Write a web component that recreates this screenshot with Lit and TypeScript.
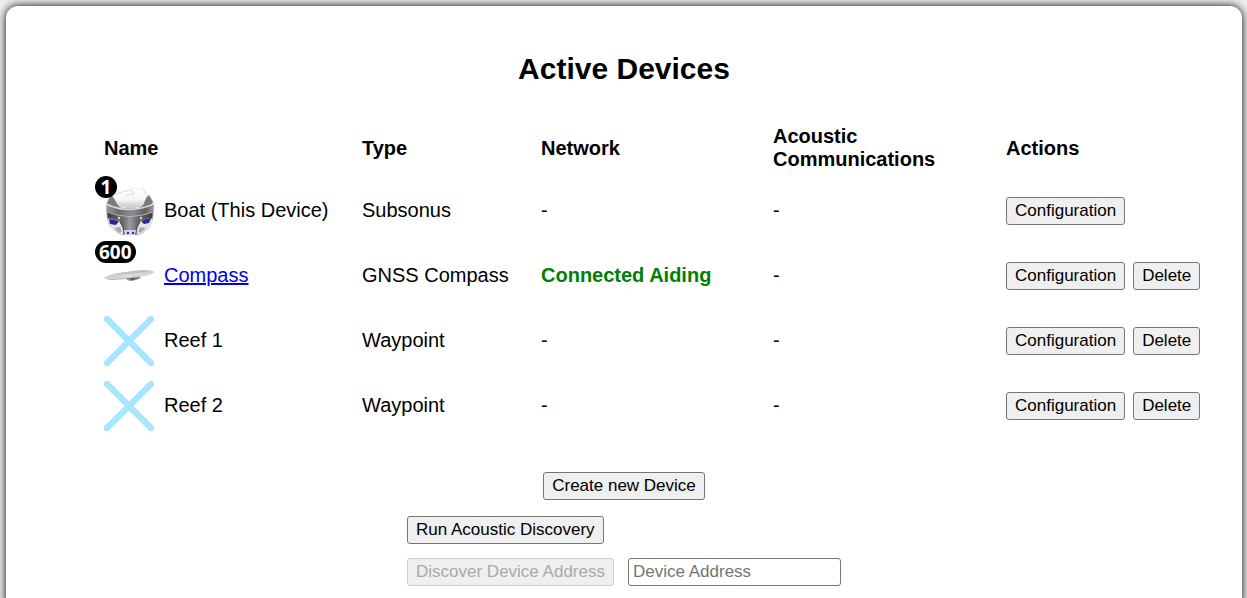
import { LitElement, html, css, nothing } from "lit";
import { customElement, property, state } from "lit/decorators.js";

type IconKind = "subsonus" | "compass" | "waypoint";

interface Device {
  name: string;
  type: string;
  icon: IconKind;
  badge?: string;
  href?: string;
  network?: string;
  removable: boolean;
}

@customElement("device-icon")
export class DeviceIcon extends LitElement {
  @property() kind: IconKind = "waypoint";
  @property() badge = "";

  static styles = css`
    :host {
      display: block;
      position: relative;
      flex: none;
      width: 50px;
      height: 50px;
    }
    svg {
      display: block;
      width: 100%;
      height: 100%;
    }
    .badge {
      position: absolute;
      left: -9px;
      top: -10px;
      box-sizing: border-box;
      min-width: 22px;
      height: 22px;
      padding: 0 4px;
      border-radius: 11px;
      background: #000;
      color: #fff;
      font: bold 19px/22px "Open Sans", "Noto Sans", sans-serif;
      text-align: center;
    }
  `;

  private subsonus() {
    return html`<svg viewBox="0 0 50 50" aria-hidden="true">
      <defs>
        <linearGradient id="side" x1="0" x2="1">
          <stop offset="0" stop-color="#b4b4b4" />
          <stop offset="0.14" stop-color="#6e6e6e" />
          <stop offset="0.86" stop-color="#6e6e6e" />
          <stop offset="1" stop-color="#b4b4b4" />
        </linearGradient>
        <linearGradient id="band" x1="0" x2="1">
          <stop offset="0" stop-color="#9a9a9a" />
          <stop offset="0.25" stop-color="#6c6c6c" />
          <stop offset="0.55" stop-color="#8a8a8a" />
          <stop offset="0.82" stop-color="#606060" />
          <stop offset="1" stop-color="#a4a4a4" />
        </linearGradient>
        <linearGradient id="dome" x1="0" x2="0" y1="0" y2="1">
          <stop offset="0" stop-color="#fff" />
          <stop offset="0.6" stop-color="#f6f6f6" />
          <stop offset="1" stop-color="#c4c4c4" />
        </linearGradient>
        <linearGradient id="column" x1="0" x2="1">
          <stop offset="0" stop-color="#3c3c3c" />
          <stop offset="0.35" stop-color="#6c6c6c" />
          <stop offset="0.5" stop-color="#9c9c9c" />
          <stop offset="0.65" stop-color="#6c6c6c" />
          <stop offset="1" stop-color="#3c3c3c" />
        </linearGradient>
      </defs>
      <path d="M2 19Q3 12 8 8L14 4 28 2 40 2 43 8Q49 12 50 19L48 24 26 28 4 24Z" fill="#e6e6e6" />
      <path d="M3 17L7 9 10 12 14 19 18 23 7 22ZM49 16L45 9 42 12 39 19 34 23 45 22Z" fill="#7c7c7c" />
      <path d="M8 9L15 4 28 2 34 3 37 1 41 3 43 9 39 19Q27 25 14 19Z" fill="url(#dome)" />
      <path d="M18 6L28 4 30 8 22 9M11 8L19 6M37 2L40 4 42 9" fill="none" stroke="#dedede" stroke-width="1" />
      <path d="M2 22Q26 34 50 22L49 33 46 41 38 48 30 49 23 49 15 48 6 41 3 34Z" fill="url(#side)" />
      <path d="M3 33L17 35 20 40 20 48 15 48 6 41ZM49 33L35 35 32 40 32 48 38 48 46 41Z" fill="#e4e4ea" />
      <path d="M5 33L15 35 12 39 6 38ZM47 32L37 35 40 38 45 37Z" fill="#2225a0" />
      <path d="M10 42L16 41 18 46 15 47ZM42 42L36 41 34 46 37 47Z" fill="#a9a9ae" />
      <path d="M3 25Q26 34 49 25L48 32Q38 32 35 37 33 41 32 45H20Q19 41 17 37 14 32 4 32Z" fill="url(#column)" />
      <path d="M16 36Q20 41 20 48M36 36Q32 41 32 48" fill="none" stroke="#444" stroke-width="1.2" />
      <path d="M2 18Q2 16 4 18Q25 27 49 18Q51 16 50 20L49 25Q27 34 3 25Z" fill="url(#band)" />
      <path d="M2 18Q25 29 50 18" fill="none" stroke="#dcdcdc" stroke-width="1.4" />
      <path d="M3 26Q26 35 49 26" fill="none" stroke="#b6b6b6" stroke-width="1" />
      <circle cx="15" cy="32" r="1.2" fill="#d9d9d9" />
      <circle cx="37" cy="32" r="1.2" fill="#d9d9d9" />
      <path d="M20 44H32L31 49H21Z" fill="#ddd2f0" />
      <circle cx="24" cy="47" r="1.2" fill="#2a25a4" />
      <circle cx="29" cy="47" r="1.2" fill="#2a25a4" />
    </svg>`;
  }

  private compass() {
    return html`<svg viewBox="0 0 50 50" aria-hidden="true">
      <defs>
        <linearGradient id="shell" x1="0" x2="0" y1="0" y2="1">
          <stop offset="0" stop-color="#c4c4c4" />
          <stop offset="0.55" stop-color="#dcdcdc" />
          <stop offset="1" stop-color="#a0a0a0" />
        </linearGradient>
      </defs>
      <path d="M22 27L34 25 37 27 32 29 27 30 23 29Z" fill="#868686" />
      <path d="M26 27L31 27 30 29 27 29Z" fill="#555c68" />
      <path d="M0 27Q3 24 14 22L28 20Q42 18 49 20Q51 21 48 23Q44 25 34 26L20 28Q4 30 0 27Z" fill="url(#shell)" />
      <path d="M4 25L16 22 31 20Q42 19 47 20Q37 22 24 23Z" fill="#c2c2c2" />
      <path d="M1 27Q14 28 28 25" fill="none" stroke="#eee" stroke-width="1" />
    </svg>`;
  }

  private waypoint() {
    return html`<svg viewBox="0 0 50 50" aria-hidden="true">
      <path d="M3 3L47 47M47 3L3 47" fill="none" stroke="#a8e6ff" stroke-width="6.5" stroke-linecap="round" />
    </svg>`;
  }

  render() {
    return html`${this[this.kind]()}${this.badge
      ? html`<span class="badge">${this.badge}</span>`
      : nothing}`;
  }
}

@customElement("app-root")
export class AppRoot extends LitElement {
  @state() private devices: Device[] = [
    { name: "Boat (This Device)", type: "Subsonus", icon: "subsonus", badge: "1", removable: false },
    {
      name: "Compass",
      type: "GNSS Compass",
      icon: "compass",
      badge: "600",
      href: "#compass",
      network: "Connected Aiding",
      removable: true,
    },
    { name: "Reef 1", type: "Waypoint", icon: "waypoint", removable: true },
    { name: "Reef 2", type: "Waypoint", icon: "waypoint", removable: true },
  ];
  @state() private address = "";

  static styles = css`
    :host {
      display: block;
      box-sizing: border-box;
      height: 100vh;
      overflow: hidden;
      padding: 6px 5px 0 6px;
      background: #eee;
      color: #000;
      font: 20px/23px "Liberation Sans", Arial, sans-serif;
    }
    .panel {
      box-sizing: border-box;
      min-height: 100vh;
      padding: 45px 36px 24px 98px;
      border-radius: 12px;
      background: #fff;
      box-shadow: 0 0 10px #000;
    }
    h1 {
      margin: 0 0 31px -62px;
      font-size: 30px;
      line-height: 36px;
      text-align: center;
    }
    table {
      width: 100%;
      table-layout: fixed;
      border-collapse: collapse;
    }
    .c-name { width: 258px; }
    .c-type { width: 179px; }
    .c-network { width: 232px; }
    .c-acoustic { width: 233px; }
    .c-actions { width: 200px; }
    th,
    td {
      padding: 0;
      text-align: left;
      vertical-align: middle;
    }
    thead th {
      height: 60px;
    }
    tbody td {
      height: 65px;
    }
    .name {
      display: flex;
      align-items: center;
      gap: 10px;
    }
    a {
      color: #0000ee;
    }
    .ok {
      color: #008000;
      font-weight: bold;
    }
    .actions {
      display: flex;
      gap: 8px;
    }
    button,
    input {
      box-sizing: border-box;
      height: 28px;
      margin: 0;
      border: 1px solid #767676;
      border-radius: 3px;
      font: 17px/20px "Liberation Sans", Arial, sans-serif;
    }
    button {
      padding: 0 8px;
      background: #efefef;
      color: #000;
      white-space: nowrap;
    }
    button:disabled {
      border-color: #d0d0d0;
      color: #aaa;
    }
    input {
      width: 213px;
      padding: 0 4px;
      background: #fff;
    }
    input::placeholder {
      color: #757575;
    }
    .footer {
      display: flex;
      flex-direction: column;
      align-items: center;
      gap: 16px;
      margin: 34px 0 0 -62px;
    }
    .discovery {
      display: flex;
      flex-direction: column;
      align-items: flex-start;
      gap: 14px;
    }
    .lookup {
      display: flex;
      gap: 14px;
    }
  `;

  private remove(device: Device) {
    this.devices = this.devices.filter((d) => d !== device);
  }

  private row(d: Device) {
    return html`<tr>
      <td>
        <div class="name">
          <device-icon .kind=${d.icon} .badge=${d.badge ?? ""}></device-icon>
          ${d.href ? html`<a href=${d.href}>${d.name}</a>` : html`<span>${d.name}</span>`}
        </div>
      </td>
      <td>${d.type}</td>
      <td>${d.network ? html`<span class="ok">${d.network}</span>` : "-"}</td>
      <td>-</td>
      <td>
        <div class="actions">
          <button type="button">Configuration</button>
          ${d.removable
            ? html`<button type="button" @click=${() => this.remove(d)}>Delete</button>`
            : nothing}
        </div>
      </td>
    </tr>`;
  }

  render() {
    return html`<main class="panel">
      <h1>Active Devices</h1>
      <table>
        <colgroup>
          <col class="c-name" />
          <col class="c-type" />
          <col class="c-network" />
          <col class="c-acoustic" />
          <col class="c-actions" />
        </colgroup>
        <thead>
          <tr>
            <th scope="col">Name</th>
            <th scope="col">Type</th>
            <th scope="col">Network</th>
            <th scope="col">Acoustic<br />Communications</th>
            <th scope="col">Actions</th>
          </tr>
        </thead>
        <tbody>
          ${this.devices.map((d) => this.row(d))}
        </tbody>
      </table>
      <div class="footer">
        <button type="button">Create new Device</button>
        <div class="discovery">
          <button type="button">Run Acoustic Discovery</button>
          <div class="lookup">
            <button type="button" ?disabled=${!this.address}>Discover Device Address</button>
            <input
              type="text"
              aria-label="Device Address"
              placeholder="Device Address"
              .value=${this.address}
              @input=${(e: Event) => (this.address = (e.target as HTMLInputElement).value)}
            />
          </div>
        </div>
      </div>
    </main>`;
  }
}
